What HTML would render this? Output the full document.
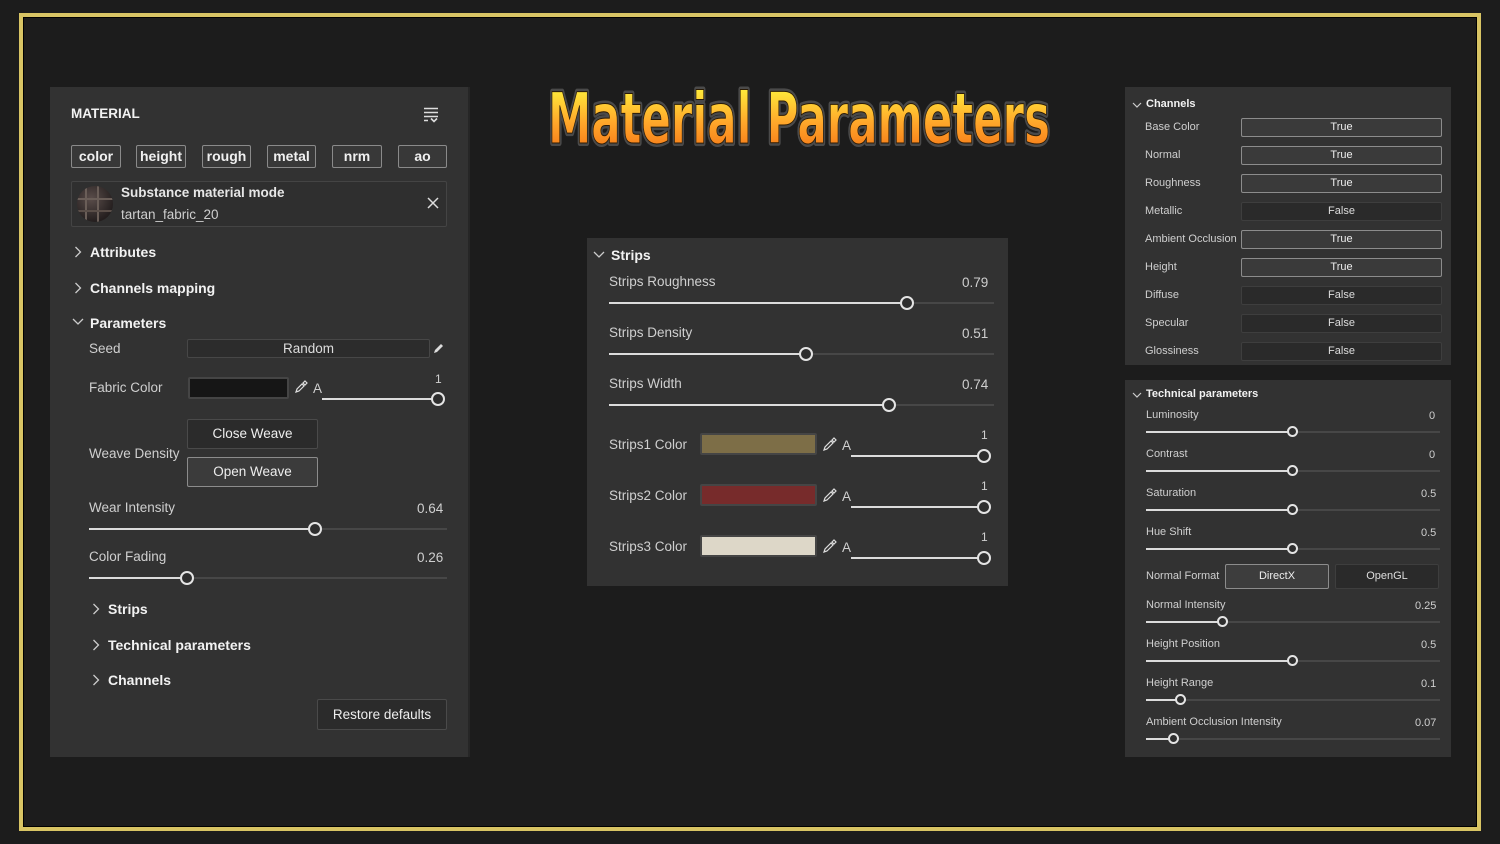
<!DOCTYPE html>
<html><head><meta charset="utf-8">
<style>
*{margin:0;padding:0;box-sizing:border-box}
body{width:1500px;height:844px;background:#1c1c1c;position:relative;overflow:hidden;font-family:"Liberation Sans","DejaVu Sans",sans-serif;color:#cfcfcf}
.a{position:absolute;white-space:nowrap}
.frame{position:absolute;left:19px;top:13px;width:1462px;height:818px;border:4px solid #d8c464;box-shadow:inset 0 0 0 1px #000}
.p{position:absolute;background:#323232}
.tr{position:absolute;height:2px;background:#474747}
.fi{position:absolute;height:2px;background:#dcdcdc}
.kn{position:absolute;width:14px;height:14px;border:2px solid #e4e4e4;border-radius:50%;background:#2e2e2e}
.ks{position:absolute;width:11px;height:11px;border:2px solid #e4e4e4;border-radius:50%;background:#2e2e2e}
.tag{position:absolute;top:145px;height:23px;border:1px solid #8a8a8a;border-radius:2px;background:#383838;color:#f0f0f0;font-weight:bold;font-size:14px;text-align:center;line-height:21px}
.h{position:absolute;font-weight:bold;color:#f2f2f2;font-size:14px;white-space:nowrap}
.l{position:absolute;font-size:13.5px;color:#cfcfcf;white-space:nowrap}
.s{position:absolute;font-size:11px;color:#cfcfcf;white-space:nowrap}
.btn{position:absolute;border:1px solid #8c8c8c;border-radius:2px;background:#3a3a3a;text-align:center;color:#eee}
.bf{position:absolute;border:1px solid #3e3e3e;border-radius:2px;background:#2a2a2a;text-align:center;color:#ddd}
.sw{position:absolute;height:22px;border:2px solid #454545;border-radius:2px}
</style></head><body>
<div class="frame"></div>

<!-- Left panel -->
<div class="p" style="left:50px;top:87px;width:420px;height:670px"></div>
<div class="a" style="left:468px;top:87px;width:2px;height:670px;background:#262626"></div>
<div class="h" style="left:71px;top:106px;font-size:13.5px">MATERIAL</div>
<svg class="a" style="left:422px;top:106px" width="18" height="18" viewBox="0 0 18 18"><g stroke="#ddd" stroke-width="1.6" fill="none"><path d="M2 2.5h14M2 6.5h14M2 10.5h14M2 14.5h4M9 12.5l3 3 3-3"/></g></svg>
<div class="tag" style="left:71px;width:50px">color</div>
<div class="tag" style="left:136px;width:50px">height</div>
<div class="tag" style="left:202px;width:49px">rough</div>
<div class="tag" style="left:267px;width:49px">metal</div>
<div class="tag" style="left:332px;width:50px">nrm</div>
<div class="tag" style="left:398px;width:49px">ao</div>
<div class="a" style="left:71px;top:181px;width:376px;height:46px;border:1px solid #444;border-radius:2px;background:#2f2f2f"></div>
<div class="a" style="left:77px;top:186px;width:36px;height:36px;border-radius:50%;background:radial-gradient(circle at 40% 35%,#5a4d4a,#262020 70%,#151212);overflow:hidden">
<div class="a" style="left:8px;top:0;width:2px;height:36px;background:#6a5e58"></div><div class="a" style="left:20px;top:0;width:2px;height:36px;background:#6a5e58"></div><div class="a" style="left:0;top:12px;width:36px;height:2px;background:#6a5e58"></div><div class="a" style="left:0;top:24px;width:36px;height:2px;background:#5a4e48"></div></div>
<div class="h" style="left:121px;top:185px;font-size:13.5px;color:#e6e6e6">Substance material mode</div>
<div class="l" style="left:121px;top:207px">tartan_fabric_20</div>
<svg class="a" style="left:427px;top:197px" width="12" height="12"><path d="M1 1l10 10M11 1L1 11" stroke="#ddd" stroke-width="1.5"/></svg>

<svg class="a" style="left:74px;top:246px" width="8" height="12"><path d="M1.5 1l5 5-5 5" stroke="#ccc" stroke-width="1.3" fill="none"/></svg><div class="h" style="left:90px;top:244px">Attributes</div>
<svg class="a" style="left:74px;top:282px" width="8" height="12"><path d="M1.5 1l5 5-5 5" stroke="#ccc" stroke-width="1.3" fill="none"/></svg><div class="h" style="left:90px;top:280px">Channels mapping</div>
<svg class="a" style="left:72px;top:318px" width="12" height="8"><path d="M1 1l5 5 5-5" stroke="#ccc" stroke-width="1.3" fill="none"/></svg><div class="h" style="left:90px;top:315px">Parameters</div>

<div class="l" style="left:89px;top:341px">Seed</div>
<div class="bf" style="left:187px;top:339px;width:243px;height:19px;font-size:13.5px;line-height:17px;background:#2c2c2c;border-color:#474747">Random</div>
<svg class="a" style="left:432px;top:342px" width="13" height="13"><path d="M2 11l1-3 6-6 2 2-6 6z" fill="#ddd"/></svg>

<div class="l" style="left:89px;top:380px">Fabric Color</div>
<div class="sw" style="left:188px;top:377px;width:101px;background:#161616"></div>
<svg class="a" style="left:294px;top:380px" width="14" height="14"><path d="M2 12l1-3 5-5 2 2-5 5z M9 3l2-2 2 2-2 2z" stroke="#ddd" stroke-width="1.2" fill="none"/></svg>
<div class="l" style="left:313px;top:381px">A</div>
<div class="l" style="left:435px;top:372px;font-size:12px">1</div>
<div class="fi" style="left:322px;top:398px;width:116px"></div><div class="kn" style="left:431px;top:392px"></div>

<div class="btn" style="left:187px;top:419px;width:131px;height:30px;line-height:28px;font-size:13.5px;background:#2b2b2b;border-color:#4a4a4a">Close Weave</div>
<div class="btn" style="left:187px;top:457px;width:131px;height:30px;line-height:28px;font-size:13.5px;background:#3b3b3b">Open Weave</div>
<div class="l" style="left:89px;top:446px">Weave Density</div>

<div class="l" style="left:89px;top:500px">Wear Intensity</div><div class="l" style="left:417px;top:501px">0.64</div>
<div class="tr" style="left:89px;top:528px;width:358px"></div><div class="fi" style="left:89px;top:528px;width:226px"></div><div class="kn" style="left:308px;top:522px"></div>
<div class="l" style="left:89px;top:549px">Color Fading</div><div class="l" style="left:417px;top:550px">0.26</div>
<div class="tr" style="left:89px;top:577px;width:358px"></div><div class="fi" style="left:89px;top:577px;width:98px"></div><div class="kn" style="left:180px;top:571px"></div>

<svg class="a" style="left:92px;top:603px" width="8" height="12"><path d="M1.5 1l5 5-5 5" stroke="#ccc" stroke-width="1.3" fill="none"/></svg><div class="h" style="left:108px;top:601px">Strips</div>
<svg class="a" style="left:92px;top:639px" width="8" height="12"><path d="M1.5 1l5 5-5 5" stroke="#ccc" stroke-width="1.3" fill="none"/></svg><div class="h" style="left:108px;top:637px">Technical parameters</div>
<svg class="a" style="left:92px;top:674px" width="8" height="12"><path d="M1.5 1l5 5-5 5" stroke="#ccc" stroke-width="1.3" fill="none"/></svg><div class="h" style="left:108px;top:672px">Channels</div>
<div class="btn" style="left:317px;top:699px;width:130px;height:31px;line-height:29px;font-size:13.5px;background:#2b2b2b;border-color:#4a4a4a">Restore defaults</div>

<!-- Title -->
<svg class="a" style="left:530px;top:70px" width="540" height="90">
<defs><linearGradient id="g" x1="0" y1="0" x2="0" y2="1"><stop offset="0.15" stop-color="#ffe83a"/><stop offset="0.55" stop-color="#ffa62a"/><stop offset="1" stop-color="#f26a12"/></linearGradient></defs>
<text x="18" y="73" font-family="DejaVu Sans, Liberation Sans, sans-serif" font-weight="bold" font-size="70" textLength="502" lengthAdjust="spacingAndGlyphs" fill="none" stroke="#4a4a4a" stroke-width="6" stroke-linejoin="round">Material Parameters</text>
<text x="18" y="73" font-family="DejaVu Sans, Liberation Sans, sans-serif" font-weight="bold" font-size="70" textLength="502" lengthAdjust="spacingAndGlyphs" fill="url(#g)" stroke="#2a1a05" stroke-width="1">Material Parameters</text>
</svg>

<!-- Middle panel -->
<div class="p" style="left:587px;top:238px;width:421px;height:348px"></div>
<svg class="a" style="left:593px;top:251px" width="12" height="8"><path d="M1 1l5 5 5-5" stroke="#ccc" stroke-width="1.3" fill="none"/></svg><div class="h" style="left:611px;top:247px">Strips</div>
<div class="l" style="left:609px;top:274px">Strips Roughness</div><div class="l" style="left:962px;top:275px">0.79</div>
<div class="tr" style="left:609px;top:302px;width:385px"></div><div class="fi" style="left:609px;top:302px;width:298px"></div><div class="kn" style="left:900px;top:296px"></div>
<div class="l" style="left:609px;top:325px">Strips Density</div><div class="l" style="left:962px;top:326px">0.51</div>
<div class="tr" style="left:609px;top:353px;width:385px"></div><div class="fi" style="left:609px;top:353px;width:197px"></div><div class="kn" style="left:799px;top:347px"></div>
<div class="l" style="left:609px;top:376px">Strips Width</div><div class="l" style="left:962px;top:377px">0.74</div>
<div class="tr" style="left:609px;top:404px;width:385px"></div><div class="fi" style="left:609px;top:404px;width:280px"></div><div class="kn" style="left:882px;top:398px"></div>

<div class="l" style="left:609px;top:437px">Strips1 Color</div>
<div class="sw" style="left:700px;top:433px;width:117px;background:#7d6e47"></div>
<div class="l" style="left:609px;top:488px">Strips2 Color</div>
<div class="sw" style="left:700px;top:484px;width:117px;background:#772b2b"></div>
<div class="l" style="left:609px;top:539px">Strips3 Color</div>
<div class="sw" style="left:700px;top:535px;width:117px;background:#ddd7c8"></div>
<svg class="a" style="left:822px;top:436px" width="16" height="120"><g stroke="#ddd" stroke-width="1.2" fill="none"><path d="M2 14l1-3 6-6 2 2-6 6zM10 4l2-2 2 2-2 2z"/><path transform="translate(0,51)" d="M2 14l1-3 6-6 2 2-6 6zM10 4l2-2 2 2-2 2z"/><path transform="translate(0,102)" d="M2 14l1-3 6-6 2 2-6 6zM10 4l2-2 2 2-2 2z"/></g></svg>
<div class="l" style="left:842px;top:438px">A</div><div class="l" style="left:842px;top:489px">A</div><div class="l" style="left:842px;top:540px">A</div>
<div class="l" style="left:981px;top:428px;font-size:12px">1</div><div class="l" style="left:981px;top:479px;font-size:12px">1</div><div class="l" style="left:981px;top:530px;font-size:12px">1</div>
<div class="fi" style="left:851px;top:455px;width:133px"></div><div class="kn" style="left:977px;top:449px"></div>
<div class="fi" style="left:851px;top:506px;width:133px"></div><div class="kn" style="left:977px;top:500px"></div>
<div class="fi" style="left:851px;top:557px;width:133px"></div><div class="kn" style="left:977px;top:551px"></div>

<!-- Right top -->
<div class="p" style="left:1125px;top:87px;width:326px;height:278px"></div>
<svg class="a" style="left:1132px;top:102px" width="10" height="7"><path d="M1 1l4 4 4-4" stroke="#ccc" stroke-width="1.2" fill="none"/></svg><div class="h" style="left:1146px;top:98px;font-size:11px">Channels</div>
<div class="s" style="left:1145px;top:121px">Base Color</div><div class="btn" style="left:1241px;top:118px;width:201px;height:19px;font-size:11px;line-height:17px">True</div>
<div class="s" style="left:1145px;top:149px">Normal</div><div class="btn" style="left:1241px;top:146px;width:201px;height:19px;font-size:11px;line-height:17px">True</div>
<div class="s" style="left:1145px;top:177px">Roughness</div><div class="btn" style="left:1241px;top:174px;width:201px;height:19px;font-size:11px;line-height:17px">True</div>
<div class="s" style="left:1145px;top:205px">Metallic</div><div class="bf" style="left:1241px;top:202px;width:201px;height:19px;font-size:11px;line-height:17px">False</div>
<div class="s" style="left:1145px;top:233px">Ambient Occlusion</div><div class="btn" style="left:1241px;top:230px;width:201px;height:19px;font-size:11px;line-height:17px">True</div>
<div class="s" style="left:1145px;top:261px">Height</div><div class="btn" style="left:1241px;top:258px;width:201px;height:19px;font-size:11px;line-height:17px">True</div>
<div class="s" style="left:1145px;top:289px">Diffuse</div><div class="bf" style="left:1241px;top:286px;width:201px;height:19px;font-size:11px;line-height:17px">False</div>
<div class="s" style="left:1145px;top:317px">Specular</div><div class="bf" style="left:1241px;top:314px;width:201px;height:19px;font-size:11px;line-height:17px">False</div>
<div class="s" style="left:1145px;top:345px">Glossiness</div><div class="bf" style="left:1241px;top:342px;width:201px;height:19px;font-size:11px;line-height:17px">False</div>

<!-- Right bottom -->
<div class="p" style="left:1125px;top:380px;width:326px;height:377px"></div>
<svg class="a" style="left:1132px;top:392px" width="10" height="7"><path d="M1 1l4 4 4-4" stroke="#ccc" stroke-width="1.2" fill="none"/></svg><div class="h" style="left:1146px;top:388px;font-size:11px">Technical parameters</div>

<div class="s" style="left:1146px;top:409px">Luminosity</div><div class="s" style="left:1429px;top:410px">0</div>
<div class="tr" style="left:1146px;top:431px;width:294px"></div><div class="fi" style="left:1146px;top:431px;width:147px"></div><div class="ks" style="left:1287px;top:426px"></div>
<div class="s" style="left:1146px;top:448px">Contrast</div><div class="s" style="left:1429px;top:449px">0</div>
<div class="tr" style="left:1146px;top:470px;width:294px"></div><div class="fi" style="left:1146px;top:470px;width:147px"></div><div class="ks" style="left:1287px;top:465px"></div>
<div class="s" style="left:1146px;top:487px">Saturation</div><div class="s" style="left:1421px;top:488px">0.5</div>
<div class="tr" style="left:1146px;top:509px;width:294px"></div><div class="fi" style="left:1146px;top:509px;width:147px"></div><div class="ks" style="left:1287px;top:504px"></div>
<div class="s" style="left:1146px;top:526px">Hue Shift</div><div class="s" style="left:1421px;top:527px">0.5</div>
<div class="tr" style="left:1146px;top:548px;width:294px"></div><div class="fi" style="left:1146px;top:548px;width:147px"></div><div class="ks" style="left:1287px;top:543px"></div>
<div class="s" style="left:1146px;top:570px">Normal Format</div>
<div class="btn" style="left:1225px;top:564px;width:104px;height:25px;font-size:11px;line-height:23px;background:#3d3d3d">DirectX</div>
<div class="bf" style="left:1335px;top:564px;width:104px;height:25px;font-size:11px;line-height:23px;background:#2a2a2a">OpenGL</div>
<div class="s" style="left:1146px;top:599px">Normal Intensity</div><div class="s" style="left:1415px;top:600px">0.25</div>
<div class="tr" style="left:1146px;top:621px;width:294px"></div><div class="fi" style="left:1146px;top:621px;width:77px"></div><div class="ks" style="left:1217px;top:616px"></div>
<div class="s" style="left:1146px;top:638px">Height Position</div><div class="s" style="left:1421px;top:639px">0.5</div>
<div class="tr" style="left:1146px;top:660px;width:294px"></div><div class="fi" style="left:1146px;top:660px;width:147px"></div><div class="ks" style="left:1287px;top:655px"></div>
<div class="s" style="left:1146px;top:677px">Height Range</div><div class="s" style="left:1421px;top:678px">0.1</div>
<div class="tr" style="left:1146px;top:699px;width:294px"></div><div class="fi" style="left:1146px;top:699px;width:35px"></div><div class="ks" style="left:1175px;top:694px"></div>
<div class="s" style="left:1146px;top:716px">Ambient Occlusion Intensity</div><div class="s" style="left:1415px;top:717px">0.07</div>
<div class="tr" style="left:1146px;top:738px;width:294px"></div><div class="fi" style="left:1146px;top:738px;width:28px"></div><div class="ks" style="left:1168px;top:733px"></div>
</body></html>
